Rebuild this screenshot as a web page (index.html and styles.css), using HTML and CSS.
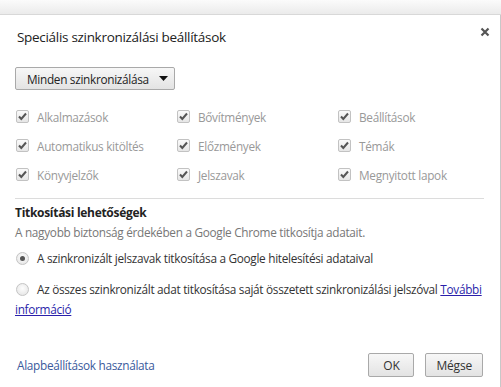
FILE: index.html
```html
<!DOCTYPE html>
<html lang="hu">
<head>
<meta charset="utf-8">
<title>Speciális szinkronizálási beállítások</title>
<link rel="stylesheet" href="styles.css">
</head>
<body>
<div class="topbar"></div>
<div class="dialog">
  <div class="header">
    <h1 class="title">Speciális szinkronizálási beállítások</h1>
    <button class="close" aria-label="Bezárás">
      <svg width="10" height="10" viewBox="0 0 10 10"><path d="M1.5 1.5 L8.5 8.5 M8.5 1.5 L1.5 8.5" stroke="#555" stroke-width="2.2" stroke-linecap="butt"/></svg>
    </button>
  </div>

  <div class="select">
    <span>Minden szinkronizálása</span>
    <svg class="arrow" width="9" height="5" viewBox="0 0 9 5"><path d="M0 0 H9 L4.5 5 Z" fill="#111"/></svg>
  </div>

  <div class="checks">
    <label class="check"><span class="box"><svg width="13" height="13" viewBox="0 0 13 13"><path d="M3 6.5 L5.3 9 L10 3.5" fill="none" stroke="#555" stroke-width="2"/></svg></span>Alkalmazások</label>
    <label class="check"><span class="box"><svg width="13" height="13" viewBox="0 0 13 13"><path d="M3 6.5 L5.3 9 L10 3.5" fill="none" stroke="#555" stroke-width="2"/></svg></span>Bővítmények</label>
    <label class="check"><span class="box"><svg width="13" height="13" viewBox="0 0 13 13"><path d="M3 6.5 L5.3 9 L10 3.5" fill="none" stroke="#555" stroke-width="2"/></svg></span>Beállítások</label>
    <label class="check"><span class="box"><svg width="13" height="13" viewBox="0 0 13 13"><path d="M3 6.5 L5.3 9 L10 3.5" fill="none" stroke="#555" stroke-width="2"/></svg></span>Automatikus kitöltés</label>
    <label class="check"><span class="box"><svg width="13" height="13" viewBox="0 0 13 13"><path d="M3 6.5 L5.3 9 L10 3.5" fill="none" stroke="#555" stroke-width="2"/></svg></span>Előzmények</label>
    <label class="check"><span class="box"><svg width="13" height="13" viewBox="0 0 13 13"><path d="M3 6.5 L5.3 9 L10 3.5" fill="none" stroke="#555" stroke-width="2"/></svg></span>Témák</label>
    <label class="check"><span class="box"><svg width="13" height="13" viewBox="0 0 13 13"><path d="M3 6.5 L5.3 9 L10 3.5" fill="none" stroke="#555" stroke-width="2"/></svg></span>Könyvjelzők</label>
    <label class="check"><span class="box"><svg width="13" height="13" viewBox="0 0 13 13"><path d="M3 6.5 L5.3 9 L10 3.5" fill="none" stroke="#555" stroke-width="2"/></svg></span>Jelszavak</label>
    <label class="check"><span class="box"><svg width="13" height="13" viewBox="0 0 13 13"><path d="M3 6.5 L5.3 9 L10 3.5" fill="none" stroke="#555" stroke-width="2"/></svg></span>Megnyitott lapok</label>
  </div>

  <div class="encryption">
    <h2 class="heading">Titkosítási lehetőségek</h2>
    <p class="desc">A nagyobb biztonság érdekében a Google Chrome titkosítja adatait.</p>
    <div class="radio-row"><span class="radio checked"></span><span>A szinkronizált jelszavak titkosítása a Google hitelesítési adataival</span></div>
    <div class="radio-row second"><span class="radio"></span><span>Az összes szinkronizált adat titkosítása saját összetett szinkronizálási jelszóval <a href="#" class="inline-link">További</a></span></div>
    <a href="#" class="inline-link wrap">információ</a>
  </div>

  <div class="footer">
    <a href="#" class="defaults">Alapbeállítások használata</a>
    <div class="buttons">
      <button class="btn ok">OK</button>
      <button class="btn">Mégse</button>
    </div>
  </div>
</div>
</body>
</html>
```

FILE: styles.css
```css
html, body {
  margin: 0;
  padding: 0;
  background: #fff;
}
body {
  font-family: "Open Sans", "Noto Sans", sans-serif;
  font-size: 11.8px;
  letter-spacing: -0.3px;
  color: #333;
  width: 501px;
  height: 387px;
  overflow: hidden;
}
.topbar {
  height: 14px;
  background: linear-gradient(#fbfbfb, #ebebeb);
  border-bottom: 1px solid #d8d8d8;
}
.dialog {
  height: 372px;
  border-right: 1px solid #c8c8c8;
  box-sizing: border-box;
  padding: 0 15px;
  display: flex;
  flex-direction: column;
}
.header {
  display: flex;
  justify-content: space-between;
  align-items: center;
  padding-top: 12px;
  height: 20px;
  box-sizing: content-box;
}
.title {
  margin: 0 0 0 2px;
  font-size: 13.5px;
  font-weight: normal;
  color: #222;
  line-height: 20px;
  letter-spacing: -0.3px;
}
.close {
  border: 0;
  background: none;
  padding: 0;
  margin: -11px -5px 0 0;
  width: 10px;
  height: 10px;
  display: flex;
}
.select {
  margin-top: 20px;
  width: 160px;
  height: 23px;
  box-sizing: border-box;
  border: 1px solid #a9a9a9;
  border-radius: 2px;
  background: linear-gradient(#f7f7f7, #e3e3e3);
  display: flex;
  align-items: center;
  justify-content: space-between;
  padding: 0 6px 0 11px;
  color: #222;
}
.checks {
  margin-top: 12px;
  display: grid;
  grid-template-columns: 161px 161px 1fr;
  grid-auto-rows: 29px;
}
.check {
  display: flex;
  align-items: center;
  color: #999;
}
.box {
  width: 13px;
  height: 13px;
  box-sizing: border-box;
  border: 1px solid #c2c2c2;
  border-radius: 2px;
  background: linear-gradient(#fafafa, #e6e6e6);
  margin: 0 8px 0 1px;
  position: relative;
  flex: none;
}
.box svg {
  position: absolute;
  left: -1px;
  top: -1px;
}
.encryption {
  margin-top: 9px;
  border-top: 1px solid #dcdcdc;
  padding-top: 6px;
  margin-right: 1px;
}
.heading {
  margin: 0;
  font-size: 12px;
  font-weight: bold;
  color: #222;
  line-height: 16px;
}
.desc {
  margin: 3px 0 0;
  color: #777;
  line-height: 16px;
}
.radio-row {
  display: flex;
  align-items: center;
  margin-top: 10px;
  line-height: 16px;
  white-space: nowrap;
}
.radio-row.second {
  margin-top: 15px;
}
.radio {
  width: 13px;
  height: 13px;
  box-sizing: border-box;
  border-radius: 50%;
  border: 1px solid #c4c4c4;
  background: radial-gradient(circle at 50% 40%, #fdfdfd, #e2e2e2);
  margin: 0 8px 0 1px;
  flex: none;
  position: relative;
}
.radio.checked::after {
  content: "";
  position: absolute;
  left: 3px;
  top: 3px;
  width: 5px;
  height: 5px;
  border-radius: 50%;
  background: #555;
}
.inline-link {
  color: #2a1faa;
  text-decoration: underline;
}
.wrap {
  display: inline-block;
  margin-top: 4px;
  line-height: 16px;
}
.footer {
  margin-top: auto;
  margin-bottom: 10px;
  display: flex;
  justify-content: space-between;
  align-items: center;
}
.defaults {
  color: #3a5a9c;
  text-decoration: none;
  margin-left: 2px;
}
.buttons {
  display: flex;
  gap: 11px;
  margin-right: 2px;
}
.btn {
  font-family: inherit;
  font-size: 12px;
  letter-spacing: -0.2px;
  color: #333;
  height: 24px;
  min-width: 46px;
  padding: 0 10px;
  border: 1px solid #a9a9a9;
  border-radius: 2px;
  background: linear-gradient(#f7f7f7, #e3e3e3);
}
```
